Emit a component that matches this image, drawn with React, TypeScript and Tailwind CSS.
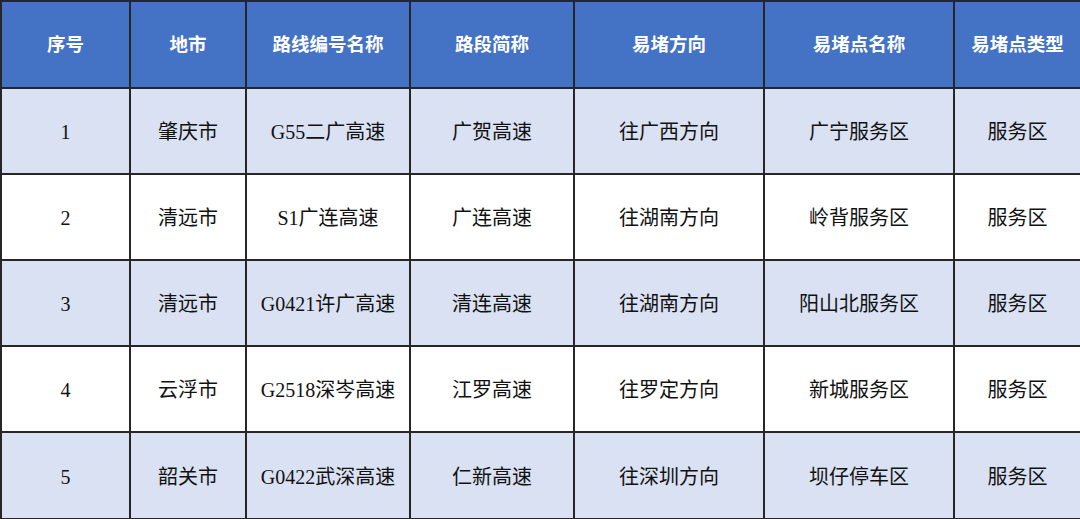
import React from "react";

const headers = ["序号", "地市", "路线编号名称", "路段简称", "易堵方向", "易堵点名称", "易堵点类型"];
const rows = [
  ["1", "肇庆市", "G55二广高速", "广贺高速", "往广西方向", "广宁服务区", "服务区"],
  ["2", "清远市", "S1广连高速", "广连高速", "往湖南方向", "岭背服务区", "服务区"],
  ["3", "清远市", "G0421许广高速", "清连高速", "往湖南方向", "阳山北服务区", "服务区"],
  ["4", "云浮市", "G2518深岑高速", "江罗高速", "往罗定方向", "新城服务区", "服务区"],
  ["5", "韶关市", "G0422武深高速", "仁新高速", "往深圳方向", "坝仔停车区", "服务区"],
];

export default function App() {
  return (
    <div className="w-[1080px] h-[519px] bg-white overflow-hidden">
      <div className="grid grid-cols-[131px_116px_164px_164px_190px_190px_125px] grid-rows-[87px_86px_86px_86px_86px_87px] border-t-2 border-[#262626] font-['Liberation_Serif','Noto_Sans_CJK_SC',serif]">
        {headers.map((h, i) => (
          <div
            key={h}
            className={`flex items-center justify-center pt-[3px] bg-[#4472c4] text-white text-[18.5px] font-bold border-b-2 border-[#262626] ${i === 0 ? "border-l-2" : ""} ${i < 6 ? "border-r-2" : ""}`}
          >
            {h}
          </div>
        ))}
        {rows.map((r, ri) =>
          r.map((c, ci) => (
            <div
              key={`${ri}-${ci}`}
              className={`flex items-center justify-center pt-[2px] text-[#111] text-[20px] border-b-2 border-[#262626] ${ri % 2 === 0 ? "bg-[#d9e1f2]" : "bg-white"} ${ci === 0 ? "border-l-2" : ""} ${ci < 6 ? "border-r-2" : ""}`}
            >
              {c}
            </div>
          ))
        )}
      </div>
    </div>
  );
}
